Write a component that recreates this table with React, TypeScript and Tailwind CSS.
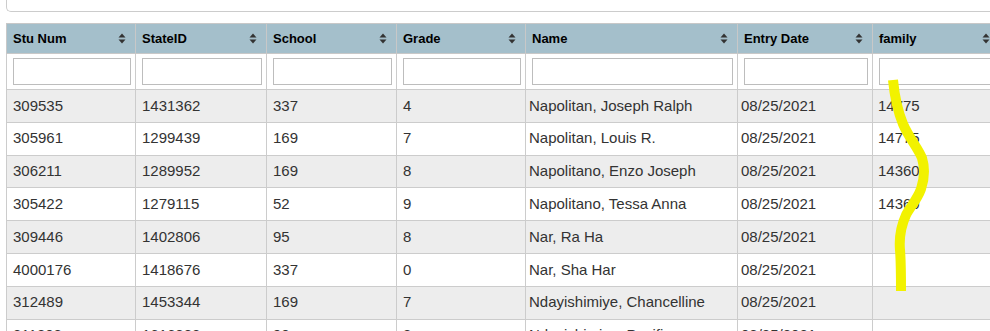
import React from 'react'

type Student = {
  stuNum: string
  stateId: string
  school: string
  grade: string
  name: string
  entryDate: string
  family: string
}

const columns = [
  { label: 'Stu Num', width: 'w-[129px]' },
  { label: 'StateID', width: 'w-[131px]' },
  { label: 'School', width: 'w-[130px]' },
  { label: 'Grade', width: 'w-[129px]' },
  { label: 'Name', width: 'w-[212px]' },
  { label: 'Entry Date', width: 'w-[135px]' },
  { label: 'family', width: 'w-[127px]' },
]

const students: Student[] = [
  { stuNum: '309535', stateId: '1431362', school: '337', grade: '4', name: 'Napolitan, Joseph Ralph', entryDate: '08/25/2021', family: '14775' },
  { stuNum: '305961', stateId: '1299439', school: '169', grade: '7', name: 'Napolitan, Louis R.', entryDate: '08/25/2021', family: '14775' },
  { stuNum: '306211', stateId: '1289952', school: '169', grade: '8', name: 'Napolitano, Enzo Joseph', entryDate: '08/25/2021', family: '14360' },
  { stuNum: '305422', stateId: '1279115', school: '52', grade: '9', name: 'Napolitano, Tessa Anna', entryDate: '08/25/2021', family: '14360' },
  { stuNum: '309446', stateId: '1402806', school: '95', grade: '8', name: 'Nar, Ra Ha', entryDate: '08/25/2021', family: '' },
  { stuNum: '4000176', stateId: '1418676', school: '337', grade: '0', name: 'Nar, Sha Har', entryDate: '08/25/2021', family: '' },
  { stuNum: '312489', stateId: '1453344', school: '169', grade: '7', name: 'Ndayishimiye, Chancelline', entryDate: '08/25/2021', family: '' },
  { stuNum: '311808', stateId: '1616883', school: '90', grade: '8', name: 'Ndayishimiye, Pacifique', entryDate: '08/25/2021', family: '' },
]

function SortIcon() {
  return (
    <svg width="8" height="11" viewBox="0 0 8 11" className="shrink-0">
      <path d="M4 0.5 L7.5 4.5 H0.5 Z" fill="#333" />
      <path d="M4 10.5 L7.5 6.5 H0.5 Z" fill="#333" />
    </svg>
  )
}

export default function App() {
  return (
    <div
      className="relative w-[990px] h-[331px] overflow-hidden bg-white pl-[6px]"
      style={{ fontFamily: '"Liberation Sans", Arial, sans-serif' }}
    >
      {/* bottom of the search panel above the table */}
      <div className="h-[12px] w-[1000px] border-l border-b border-[#cccccc] rounded-bl-[5px]" />

      <table className="mt-[11px] table-fixed border-collapse w-[993px] text-[15px] text-[#333]">
        <colgroup>
          {columns.map((c) => (
            <col key={c.label} className={c.width} />
          ))}
        </colgroup>
        <thead>
          <tr className="h-[30px] bg-[#a4bfcb]">
            {columns.map((c) => (
              <th
                key={c.label}
                className="border border-[#c8c8c8] px-[6px] text-left text-[13px] font-bold text-black"
              >
                <div className="flex items-center justify-between pr-[3px]">
                  <span>{c.label}</span>
                  <SortIcon />
                </div>
              </th>
            ))}
          </tr>
          <tr className="h-[36px] bg-white">
            {columns.map((c) => (
              <td key={c.label} className="border border-[#cccccc] pl-[6px] pr-[4px] py-[4px]">
                <input
                  type="text"
                  className="block w-full h-[27px] border border-[#bdbdbd] bg-white outline-none"
                />
              </td>
            ))}
          </tr>
        </thead>
        <tbody>
          {students.map((s, i) => (
            <tr key={s.stuNum} className={i % 2 === 0 ? 'h-[32.8px] bg-[#ededed]' : 'h-[32.8px] bg-white'}>
              <td className="border border-[#cccccc] px-[6px] whitespace-nowrap">{s.stuNum}</td>
              <td className="border border-[#cccccc] px-[6px] whitespace-nowrap">{s.stateId}</td>
              <td className="border border-[#cccccc] px-[6px] whitespace-nowrap">{s.school}</td>
              <td className="border border-[#cccccc] px-[6px] whitespace-nowrap">{s.grade}</td>
              <td className="border border-[#cccccc] pl-[3px] pr-[4px] whitespace-nowrap">{s.name}</td>
              <td className="border border-[#cccccc] pl-[3px] pr-[5px] whitespace-nowrap">{s.entryDate}</td>
              <td className="border border-[#cccccc] px-[5px] whitespace-nowrap">{s.family}</td>
            </tr>
          ))}
        </tbody>
      </table>

      {/* freehand yellow marker stroke */}
      <svg
        className="absolute left-0 top-0 pointer-events-none"
        width="990"
        height="331"
        viewBox="0 0 990 331"
      >
        <path
          d="M893 80 C895 100 898 112 903 124 C909 138 918 148 922 158 C925 168 924 180 921 189 C917 200 910 207 906 215 C901 226 899 238 900 250 C901 262 901 276 901 291"
          stroke="#f2f200"
          strokeWidth="10"
          fill="none"
          strokeLinecap="butt"
        />
      </svg>
    </div>
  )
}
